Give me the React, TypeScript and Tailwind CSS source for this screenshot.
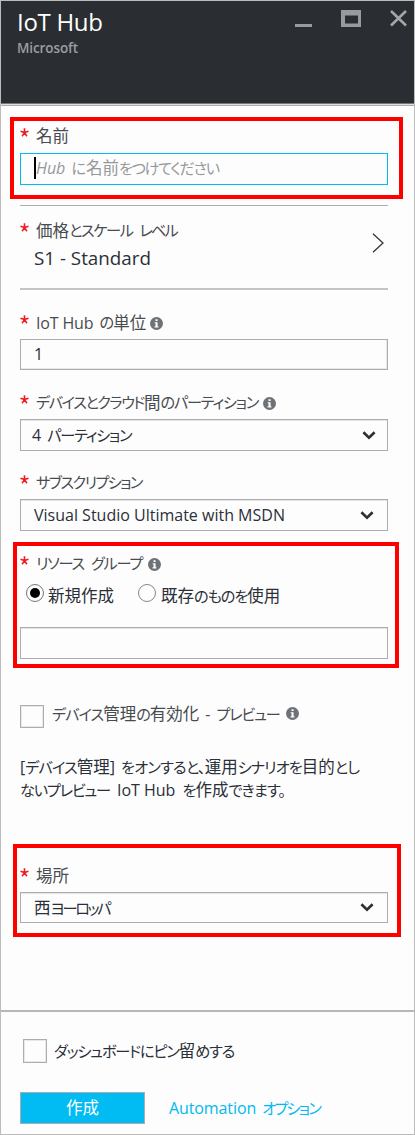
import type { ReactNode } from 'react';

const Kana = ({ children, className = 'tracking-[-1px]' }: { children: ReactNode; className?: string }) => (
  <span className={`text-[15.2px] leading-none ${className}`}>{children}</span>
);

const InfoIcon = ({ className = '' }: { className?: string }) => (
  <svg className={`shrink-0 ${className}`} width="13" height="13" viewBox="0 0 12 12">
    <circle cx="6" cy="6" r="6" fill="#6d7278" />
    <path d="M4.3 4.8h2.7v3.8h.8v1H4.2v-1h.9V5.7h-.8zM5.1 2.1H7v1.7H5.1z" fill="#fff" />
  </svg>
);

const Label = ({ children, className = '' }: { children: ReactNode; className?: string }) => (
  <div className={`flex h-6 items-center text-[#484b50] ${className}`}>
    <svg className="mr-[7px] mb-[8px] shrink-0" width="9" height="9" viewBox="0 0 9 9">
      <path d="M4.5 4.6V.3M4.5 4.6L.5 3.3M4.5 4.6l4-1.3M4.5 4.6L2.1 8.2M4.5 4.6l2.4 3.6" stroke="#ee1c25" strokeWidth="1.6" fill="none" />
    </svg>
    {children}
  </div>
);

const Chevron = ({ className = '' }: { className?: string }) => (
  <svg className={`shrink-0 ${className}`} width="14" height="9" viewBox="0 0 14 9">
    <path d="M1.4 1.3L7 6.7l5.6-5.4" fill="none" stroke="#293036" strokeWidth="2.6" />
  </svg>
);

const Select = ({ children, className = '', chevron = 'mr-[13px]' }: { children: ReactNode; className?: string; chevron?: string }) => (
  <div className={`flex w-[368px] items-center justify-between border border-[#adadb0] shadow-[inset_0_1px_0_#e5e5e5] ${className}`}>
    <span>{children}</span>
    <Chevron className={chevron} />
  </div>
);

const Check = ({ className = '' }: { className?: string }) => (
  <span className={`block w-6 shrink-0 border border-[#adadb0] shadow-[inset_0_0_0_1px_#e8e8e8] ${className}`} />
);

const Kanji = ({ children }: { children: ReactNode }) => <span className="text-[16.5px] leading-none">{children}</span>;

export default function App() {
  return (
    <div className="flex h-[1135px] w-[415px] flex-col border border-[#bcbcbc] bg-[#fdfdfd] font-['Open_Sans','Noto_Sans_CJK_JP',sans-serif] text-[16px] leading-6 whitespace-nowrap text-[#2b2f38] [font-feature-settings:'palt']">
      <header className="flex h-[102px] shrink-0 justify-between bg-[#2a2e32] pl-4">
        <div className="pt-[6px]">
          <h1 className="text-[24px] leading-[30px] tracking-[-0.3px] text-white">IoT Hub</h1>
          <p className="mt-[1px] text-[13.5px] leading-[20px] font-semibold tracking-[-0.1px] text-[#9b9da0]">Microsoft</p>
        </div>
        <svg width="119" height="32" viewBox="295 1 119 32" fill="none">
          <path d="M295 25.5h17" stroke="#999a9d" strokeWidth="3" />
          <path d="M341 10h20v17h-20zM345 15.5v8h13v-8z" fill="#999a9d" fillRule="evenodd" />
          <path d="M391 11l15 14.5M406 11l-15 14.5" stroke="#a4a5a7" strokeWidth="2.6" />
        </svg>
      </header>
      <div className="h-[3px] shrink-0 border-t border-b border-t-[#77777a] border-b-[#adadb0] bg-[#dedede]" />

      <main className="flex flex-1 flex-col">
        <section className="mt-[11px] ml-[9px] h-[82px] w-[393px] border-4 border-[#ff0000] pl-[6px]">
          <Label className="mt-[3px]"><Kanji>名前</Kanji></Label>
          <div className="mt-[5px] flex h-8 w-[368px] items-center border border-[#00bcf2] pl-[13px] text-[#96989c]">
            <span className="mb-[2px] h-[22px] w-[2px] shrink-0 bg-black" />
            <span className="mb-[2px]"><i>Hub</i><Kana className="ml-[6px]">に</Kana><Kanji>名前</Kanji><Kana className="tracking-[-1.3px]">をつけてください</Kana></span>
          </div>
        </section>

        <section className="mt-[6px] ml-[19px] flex h-[85px] w-[368px] items-center justify-between border-t border-b-2 border-t-[#adadb0] border-b-[#c4c4c6]">
          <div className="mt-[-5px]">
            <Label><Kanji>価格</Kanji><Kana className="tracking-[-1.4px]">とスケール</Kana><Kana className="ml-[7px] tracking-[-1.9px]">レベル</Kana></Label>
            <p className="mt-[3px] ml-[14px] text-[18.8px] leading-6">S1 - Standard</p>
          </div>
          <svg className="mt-[-8px] mr-[4px]" width="12" height="20" viewBox="0 0 12 20">
            <path d="M1 .7l10 9.3L1 19.3" fill="none" stroke="#33363e" strokeWidth="1.3" />
          </svg>
        </section>

        <section className="ml-[19px] w-[368px] pt-[21px]">
          <Label><span className="tracking-[-0.15px]">IoT Hub</span><Kana className="ml-[6px] tracking-[-0.8px]">の</Kana><Kanji>単位</Kanji><InfoIcon className="ml-[4px]" /></Label>
          <div className="mt-[4px] flex h-[31px] items-center border border-[#adadb0] pb-[2px] pl-[13px] shadow-[inset_-1px_-1px_0_#e8e8e8]">1</div>
          <Label className="mt-[21px]"><Kana className="tracking-[-1.45px]">デバイスとクラウド</Kana><Kanji>間</Kanji><Kana className="tracking-[-1.2px]">のパーティション</Kana><InfoIcon className="ml-[5px]" /></Label>
          <Select className="mt-[4px] h-8 pl-[11px]" chevron="mr-[11px]">4<Kana className="ml-[6px] tracking-[-1.2px]">パーティション</Kana></Select>
          <Label className="mt-[20px]"><Kana className="tracking-[-1.6px]">サブスクリプション</Kana></Label>
          <Select className="mt-[4px] h-8 pl-[13px]">Visual Studio Ultimate with MSDN</Select>
        </section>

        <section className="mt-[11px] ml-[12px] h-[126px] w-[386px] border-4 border-[#ff0000] pl-[3px]">
          <Label className="mt-[6px]"><Kana className="tracking-[-1.2px]">リソース</Kana><Kana className="ml-[7px] tracking-[-1.2px]">グループ</Kana><InfoIcon className="ml-[6px]" /></Label>
          <div className="mt-[5px] flex h-6 items-center pl-[6px]">
            <span className="flex size-[18px] items-center justify-center rounded-full border border-[#74777a]"><span className="size-[10px] rounded-full bg-black" /></span>
            <span className="mt-[5px] ml-[4px] w-[90px]"><Kanji>新規作成</Kanji></span>
            <span className="size-[18px] rounded-full border border-[#85878a]" />
            <span className="mt-[5px] ml-[5px]"><Kanji>既存</Kanji><Kana className="tracking-[-1.1px]">のものを</Kana><Kanji>使用</Kanji></span>
          </div>
          <div className="mt-[22px] h-8 w-[368px] border border-[#adadb0] shadow-[inset_0_1px_0_#e5e5e5]" />
        </section>

        <section className="mt-[34px] ml-[19px] w-[368px]">
          <div className="flex h-[26px] items-start text-[#484b50]">
            <Check className="mt-[3px] h-[23px]" />
            <span className="ml-[8px]"><Kana className="tracking-[-1px]">デバイス</Kana><Kanji>管理</Kanji><Kana>の</Kana><Kanji>有効化</Kanji><span className="mx-[6px]">-</span><Kana className="tracking-[-1.2px]">プレビュー</Kana></span>
            <InfoIcon className="mt-[5px] ml-[6px]" />
          </div>
          <p className="mt-[28px] h-[46px] leading-[23px]">
            [<Kana className="tracking-[-0.9px]">デバイス</Kana><Kanji>管理</Kanji>]<Kana className="ml-[6px] tracking-[-0.8px]">をオンすると、</Kana><Kanji>運用</Kanji><Kana className="tracking-[-1px]">シナリオを</Kana><Kanji>目的</Kanji><Kana className="tracking-[-0.8px]">とし</Kana><br />
            <Kana className="tracking-[-1.2px]">ないプレビュー</Kana><span className="mx-[7px]">IoT Hub</span><Kana>を</Kana><Kanji>作成</Kanji><Kana className="tracking-[-0.9px]">できます。</Kana>
          </p>
        </section>

        <section className="mt-[42px] ml-[12px] h-[93px] w-[388px] border-4 border-[#ff0000] pl-[3px]">
          <Label className="mt-[16px]"><Kanji>場所</Kanji></Label>
          <Select className="mt-[4px] h-[31px] pl-[13px]"><Kanji>西</Kanji><Kana className="tracking-[-2.4px]">ヨーロッパ</Kana></Select>
        </section>
      </main>

      <footer className="h-[124px] shrink-0 border-t-2 border-[#b7b7b9] pl-[19px]">
        <div className="mt-[27px] flex h-6 items-center pl-[3px]">
          <Check className="h-6" />
          <span className="ml-[7px]"><Kana className="tracking-[-1.2px]">ダッシュボードにピン</Kana><Kanji>留</Kanji><Kana className="tracking-[-1.2px]">めする</Kana></span>
        </div>
        <div className="mt-[29px] flex h-8 items-center">
          <button className="h-8 w-[125px] border border-[#adadb0] bg-[#00bcf2] text-white"><Kanji>作成</Kanji></button>
          <a className="ml-[24px] text-[#00b9ef]"><span className="tracking-[-0.1px]">Automation</span><Kana className="ml-[6px] tracking-[-1.8px]">オプション</Kana></a>
        </div>
      </footer>
    </div>
  );
}
